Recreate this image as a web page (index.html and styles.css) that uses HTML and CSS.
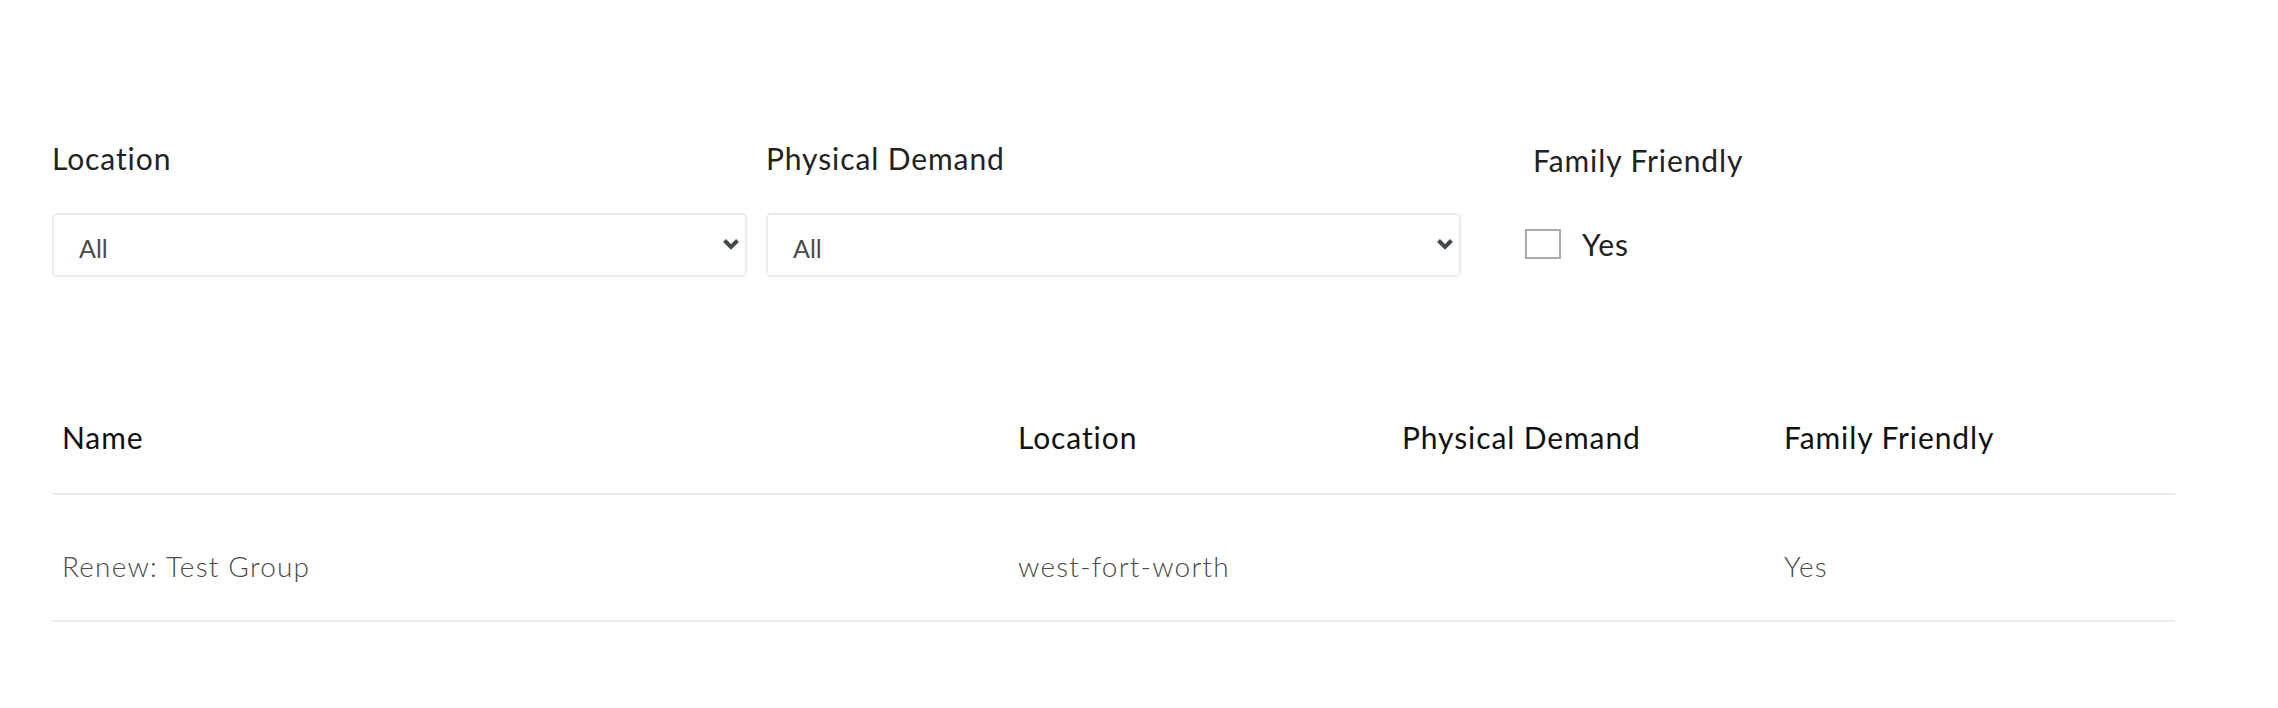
FILE: index.html
```html
<!DOCTYPE html>
<html>
<head>
    <meta charset="UTF-8">
    <meta name="viewport" content="width=device-width, initial-scale=1.0">
    <title>Groups</title>
    <link rel="stylesheet" href="styles.css">
</head>
<body>
    <div class="page">
        <div class="filters">
            <div class="field">
                <label for="location">Location</label>
                <div class="select-wrap">
                    <select id="location">
                        <option>All</option>
                    </select>
                    <svg class="chevron" viewBox="0 0 18 12"><path d="M2.5 2.5l6.5 6.5 6.5-6.5"/></svg>
                </div>
            </div>
            <div class="field">
                <label for="demand">Physical Demand</label>
                <div class="select-wrap">
                    <select id="demand">
                        <option>All</option>
                    </select>
                    <svg class="chevron" viewBox="0 0 18 12"><path d="M2.5 2.5l6.5 6.5 6.5-6.5"/></svg>
                </div>
            </div>
            <div class="field field-check">
                <span class="field-title">Family Friendly</span>
                <label class="check" for="family">
                    <input type="checkbox" id="family">
                    <span>Yes</span>
                </label>
            </div>
        </div>

        <table class="groups">
            <thead>
                <tr>
                    <th class="col-name">Name</th>
                    <th class="col-location">Location</th>
                    <th class="col-demand">Physical Demand</th>
                    <th>Family Friendly</th>
                </tr>
            </thead>
            <tbody>
                <tr>
                    <td>Renew: Test Group</td>
                    <td>west-fort-worth</td>
                    <td></td>
                    <td>Yes</td>
                </tr>
            </tbody>
        </table>
    </div>
</body>
</html>
```

FILE: styles.css
```css
body {
    margin: 0;
    font-family: Lato, "Open Sans", sans-serif;
    background-color: #ffffff;
    color: #222;
}

.page {
    width: 2123px;
    padding: 140px 0 0 52px;
}

.filters {
    display: grid;
    grid-template-columns: repeat(3, 1fr);
    gap: 19px;
}

.field label,
.field-title {
    display: block;
    font-size: 30px;
    line-height: 36px;
    letter-spacing: 0.9px;
    color: #222;
    margin-bottom: 37px;
}

.select-wrap {
    position: relative;
}

select {
    appearance: none;
    -webkit-appearance: none;
    width: 100%;
    height: 64px;
    padding: 6px 50px 0 25px;
    font-family: inherit;
    font-size: 25px;
    color: #4a4a4a;
    background-color: #fff;
    border: 2px solid #ececec;
    border-radius: 5px;
    box-sizing: border-box;
}

.chevron {
    position: absolute;
    right: 7px;
    top: 25px;
    width: 18px;
    height: 12px;
    fill: none;
    stroke: #44474c;
    stroke-width: 4;
    pointer-events: none;
}

.field-check {
    padding-left: 45px;
}

.field-check .field-title {
    margin: 2px 0 0 8px;
}

.field .check {
    display: flex;
    align-items: center;
    gap: 21px;
    margin: 48px 0 0;
    font-size: 30px;
}

.check input {
    appearance: none;
    -webkit-appearance: none;
    width: 36px;
    height: 30px;
    margin: 0;
    border: 2px solid #ababab;
    background: #fff;
}

.groups {
    width: 100%;
    margin-top: 142px;
    border-collapse: collapse;
}

.groups th {
    text-align: left;
    font-weight: 400;
    font-size: 30px;
    letter-spacing: 0.9px;
    color: #111;
    padding: 0 10px 38px;
    border-bottom: 2px solid #ececec;
}

.groups td {
    font-weight: 300;
    font-size: 28px;
    letter-spacing: 1.2px;
    color: #4a4a4a;
    padding: 54px 10px 37px;
    border-bottom: 2px solid #ececec;
}

.col-name {
    width: 936px;
}

.col-location {
    width: 364px;
}

.col-demand {
    width: 362px;
}
```
